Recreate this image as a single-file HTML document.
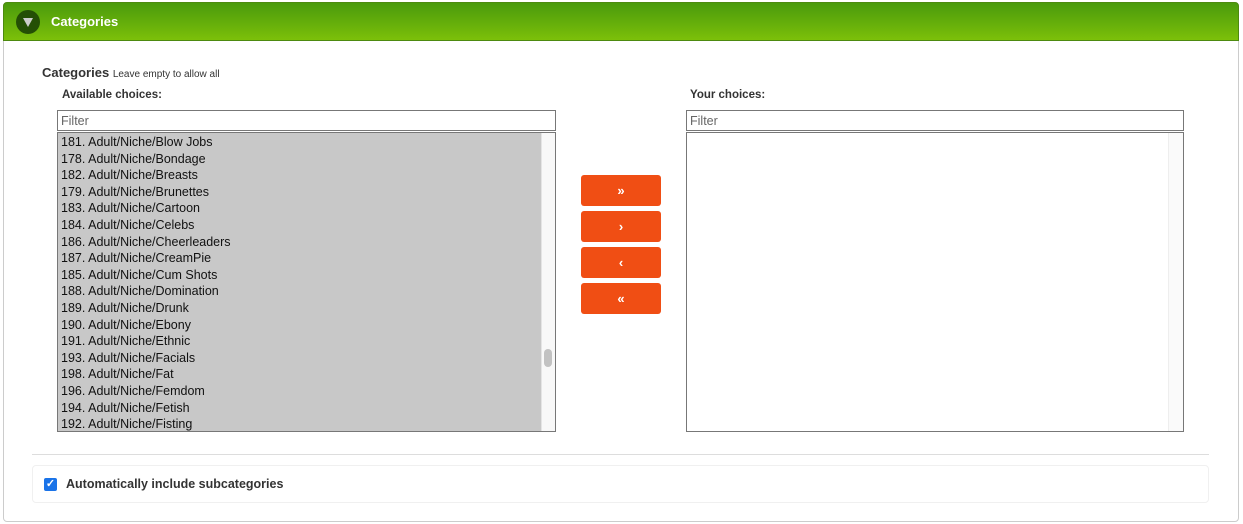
<!DOCTYPE html><html><head><style>
*{box-sizing:border-box;margin:0;padding:0}
body{width:1243px;height:524px;background:#fff;font-family:"Liberation Sans",Arial,sans-serif;position:relative;overflow:hidden;color:#333}
.panel{position:absolute;left:3px;top:2px;width:1236px;height:520px;border:1px solid #ccc;border-radius:4px}
.hdr{position:absolute;left:3px;top:2px;width:1236px;height:39px;border-radius:4px 4px 0 0;background:linear-gradient(#4a9a0c,#7cc00a);border:1px solid #4d8a10}
.hdr .ic{position:absolute;left:12px;top:7px;width:24px;height:24px;border-radius:50%;background:#244f05}
.hdr .ic:after{content:"";position:absolute;left:7px;top:8px;border-left:5px solid transparent;border-right:5px solid transparent;border-top:9px solid #ccc}
.hdr span{position:absolute;left:47px;top:11px;color:#fff;font-weight:bold;font-size:13px}
.t{position:absolute;font-size:12px}
.box{position:absolute;border:1px solid #777;background:#fff}
.filter{position:absolute;height:21px;border:1px solid #777;font-size:12.5px;color:#666;padding:3px 3px;line-height:14px}
.list div{font-size:12.5px;line-height:16.6px;color:#111;padding-left:3px;white-space:nowrap}
.btn{position:absolute;left:581px;width:80px;height:31px;background:#f04e14;border-radius:3px;color:#fff;font-weight:bold;font-size:13px;text-align:center;line-height:31px}
</style></head><body>
<div class="panel"></div>
<div class="hdr"><div class="ic"></div><span>Categories</span></div>
<div class="t" style="left:42px;top:65px;font-weight:bold;font-size:13px">Categories <span style="font-weight:normal;font-size:10px">Leave empty to allow all</span></div>
<div class="t" style="left:62px;top:89px;font-weight:bold;font-size:11.5px">Available choices:</div>
<div class="t" style="left:690px;top:89px;font-weight:bold;font-size:11.5px">Your choices:</div>
<div class="filter" style="left:57px;top:110px;width:499px">Filter</div>
<div class="filter" style="left:686px;top:110px;width:498px">Filter</div>
<div class="box list" style="left:57px;top:132px;width:499px;height:300px;background:#c8c8c8;overflow:hidden;padding-top:1px">
<div>181. Adult/Niche/Blow Jobs</div><div>178. Adult/Niche/Bondage</div><div>182. Adult/Niche/Breasts</div><div>179. Adult/Niche/Brunettes</div><div>183. Adult/Niche/Cartoon</div><div>184. Adult/Niche/Celebs</div><div>186. Adult/Niche/Cheerleaders</div><div>187. Adult/Niche/CreamPie</div><div>185. Adult/Niche/Cum Shots</div><div>188. Adult/Niche/Domination</div><div>189. Adult/Niche/Drunk</div><div>190. Adult/Niche/Ebony</div><div>191. Adult/Niche/Ethnic</div><div>193. Adult/Niche/Facials</div><div>198. Adult/Niche/Fat</div><div>196. Adult/Niche/Femdom</div><div>194. Adult/Niche/Fetish</div><div>192. Adult/Niche/Fisting</div>
<div style="position:absolute;left:483px;top:0;width:15px;height:300px;background:#f8f8f8;border-left:1px solid #e4e4e4"></div>
<div style="position:absolute;left:486px;top:216px;width:8px;height:18px;border-radius:4px;background:#c2c2c2"></div>
</div>
<div class="box" style="left:686px;top:132px;width:498px;height:300px"><div style="position:absolute;right:0;top:0;width:15px;height:298px;background:#fafafa;border-left:1px solid #eee"></div></div>
<div class="btn" style="top:175px">»</div>
<div class="btn" style="top:211px">›</div>
<div class="btn" style="top:247px">‹</div>
<div class="btn" style="top:283px">«</div>
<div style="position:absolute;left:32px;top:454px;width:1177px;height:1px;background:#ddd"></div>
<div style="position:absolute;left:32px;top:465px;width:1177px;height:38px;border:1px solid #f0f0f0;border-radius:4px"></div>
<div style="position:absolute;left:44px;top:478px;width:13px;height:13px;background:#1a73e8;border-radius:2px;color:#fff;font-size:11px;line-height:13px;text-align:center;font-weight:bold">✓</div>
<div class="t" style="left:66px;top:477px;font-weight:bold;font-size:12.5px">Automatically include subcategories</div>
</body></html>
